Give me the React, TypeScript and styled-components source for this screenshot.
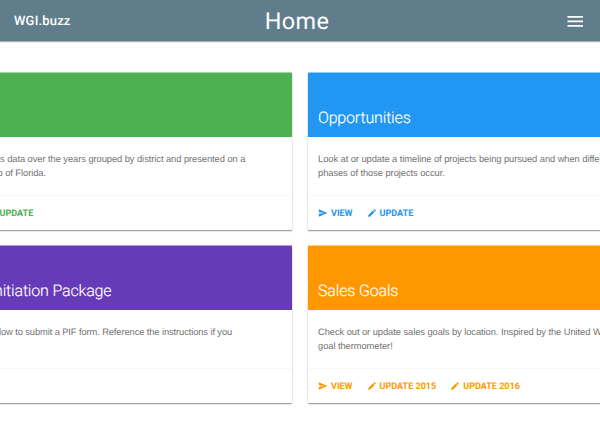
import React from "react";
import styled, { createGlobalStyle } from "styled-components";

const GlobalStyle = createGlobalStyle`
  * { box-sizing: border-box; }
  body { margin: 0; background: #fff; overflow: hidden; }
  p, h1, h2 { margin: 0; }
`;

const Page = styled.div`
  width: 100%;
  height: 428px;
  overflow: hidden;
  font-family: "Roboto", sans-serif;
  text-rendering: geometricPrecision;
`;

const Header = styled.header`
  display: grid;
  grid-template-columns: 1fr auto 1fr;
  align-items: center;
  height: 41px;
  padding: 0 16px 0 14px;
  background: #607d8b;
  color: #fff;
  box-shadow: 0 1px 1px rgba(0, 0, 0, 0.32);
`;

const Brand = styled.a`
  padding-top: 2px;
  font-size: 13px;
  font-weight: 500;
  letter-spacing: 0.17px;
`;

const Heading = styled.h1`
  font-size: 23.4px;
  font-weight: 400;
  line-height: 40px;
  letter-spacing: 0.4px;
  margin-left: -4px;
`;

const MenuButton = styled.button`
  justify-self: end;
  display: flex;
  padding: 0;
  margin-top: 2px;
  border: 0;
  background: none;
  color: #fff;
`;

const MenuIcon = styled.svg`
  width: 17px;
  height: 11px;
  fill: currentColor;
`;

const Cards = styled.main`
  display: grid;
  grid-template-columns: 364px 364px;
  gap: 15px 16px;
  width: 744px;
  margin: 31px 0 0 -72px;
`;

const Card = styled.article`
  height: 158px;
  border-radius: 1px;
  background: #fff;
  box-shadow: 0 1px 1.5px rgba(0, 0, 0, 0.45);
`;

const Banner = styled.div<{ $color: string }>`
  display: flex;
  align-items: flex-end;
  height: 65px;
  padding: 0 10px 9px;
  border-radius: 1px 1px 0 0;
  background: ${(p) => p.$color};
  box-shadow: inset 0 1px 0 rgba(255, 255, 255, 0.5);
`;

const Title = styled.h2`
  font-size: 16px;
  font-weight: 300;
  line-height: 20px;
  letter-spacing: -0.17px;
  color: #fff;
  -webkit-text-stroke: 0.15px #fff;
  white-space: nowrap;
`;

const Body = styled.div`
  height: 58px;
  padding: 16px 10px 0;
  font-family: "Liberation Sans", Arial, sans-serif;
  font-size: 9.33px;
  line-height: 13.6px;
  color: #727272;
`;

const Line = styled.p<{ $spacing: number }>`
  display: flex;
  white-space: pre;
  letter-spacing: ${(p) => p.$spacing}px;
`;

const Lead = styled.span<{ $width: number }>`
  display: flex;
  justify-content: flex-end;
  flex: 0 0 ${(p) => p.$width}px;
`;

const Actions = styled.div<{ $color: string }>`
  display: flex;
  align-items: center;
  gap: 14px;
  height: 36px;
  padding: 0 10px;
  border-top: 1px solid #f7f7f7;
  color: ${(p) => p.$color};
`;

const Action = styled.a`
  display: flex;
  align-items: center;
  gap: 3px;
  font-size: 9.1px;
  font-weight: 700;
  line-height: 12px;
  letter-spacing: -0.04px;
  white-space: nowrap;
`;

const Glyph = styled.svg`
  width: 10px;
  height: 10px;
  margin-bottom: 1px;
  fill: currentColor;
`;

const icons = {
  send: "M2.01 21L23 12 2.01 3 2 10l15 2-15 2z",
  edit: "M3 17.25V21h3.75L17.81 9.94l-3.75-3.75L3 17.25zM20.71 7.04c.39-.39.39-1.02 0-1.41l-2.34-2.34c-.39-.39-1.02-.39-1.41 0l-1.83 1.83 3.75 3.75 1.83-1.83z",
};

type TextLine = { lead?: string; leadWidth?: number; text: string; spacing?: number };
type CardData = {
  title: string;
  color: string;
  lines: TextLine[];
  actions: { icon: keyof typeof icons; label: string }[];
};

const cards: CardData[] = [
  {
    title: "",
    color: "#4caf50",
    lines: [
      { lead: "View WGI'", text: "s data over the years grouped by district and presented on a" },
      { lead: "ma", leadWidth: 59.5, text: "p of Florida." },
    ],
    actions: [{ icon: "send", label: "VIEW" }, { icon: "edit", label: "UPDATE" }],
  },
  {
    title: "Opportunities",
    color: "#2196f3",
    lines: [
      { text: "Look at or update a timeline of projects being pursued and when different" },
      { text: "phases of those projects occur.", spacing: -0.06 },
    ],
    actions: [{ icon: "send", label: "VIEW" }, { icon: "edit", label: "UPDATE" }],
  },
  {
    title: "Project Initiation Package",
    color: "#673ab7",
    lines: [
      {
        lead: "See be",
        leadWidth: 61,
        text: "low to submit a PIF form. Reference the instructions if you",
        spacing: -0.1,
      },
    ],
    actions: [],
  },
  {
    title: "Sales Goals",
    color: "#ff9800",
    lines: [
      { text: "Check out or update sales goals by location. Inspired by the United Way" },
      { text: "goal thermometer!" },
    ],
    actions: [
      { icon: "send", label: "VIEW" },
      { icon: "edit", label: "UPDATE 2015" },
      { icon: "edit", label: "UPDATE 2016" },
    ],
  },
];

export default function App() {
  return (
    <Page>
      <GlobalStyle />
      <Header>
        <Brand>WGI.buzz</Brand>
        <Heading>Home</Heading>
        <MenuButton aria-label="Menu">
          <MenuIcon viewBox="0 0 17 11">
            <path d="M.5 0h15.5v1.8H.5zM.5 4.5h15.5v1.7H.5zM.5 8.9h15.5v1.8H.5z" />
          </MenuIcon>
        </MenuButton>
      </Header>
      <Cards>
        {cards.map((card) => (
          <Card key={card.color}>
            <Banner $color={card.color}>
              <Title>{card.title}</Title>
            </Banner>
            <Body>
              {card.lines.map((line) => (
                <Line key={line.text} $spacing={line.spacing ?? -0.06}>
                  {line.lead && <Lead $width={line.leadWidth ?? 62}>{line.lead}</Lead>}
                  {line.text}
                </Line>
              ))}
            </Body>
            <Actions $color={card.color}>
              {card.actions.map((action) => (
                <Action key={action.label}>
                  <Glyph viewBox="0 0 24 24">
                    <path d={icons[action.icon]} />
                  </Glyph>
                  {action.label}
                </Action>
              ))}
            </Actions>
          </Card>
        ))}
      </Cards>
    </Page>
  );
}
